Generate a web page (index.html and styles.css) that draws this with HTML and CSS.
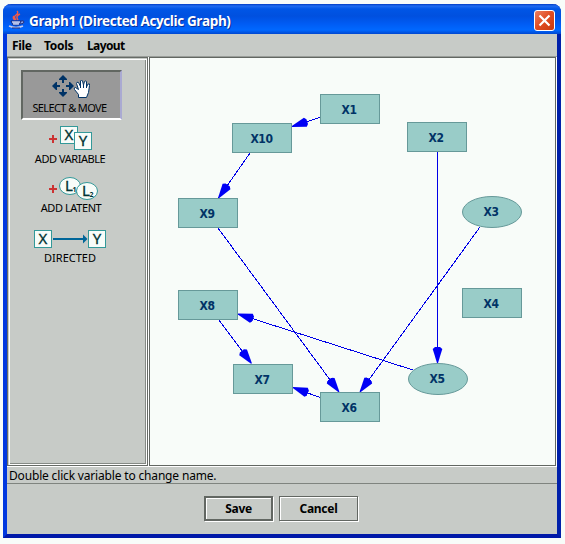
FILE: index.html
```html
<!DOCTYPE html>
<html lang="en">
<head>
<meta charset="utf-8">
<title>Graph1 (Directed Acyclic Graph)</title>
<link rel="stylesheet" href="styles.css">
</head>
<body>
<div class="window">
  <header class="titlebar">
    <svg class="java" width="16" height="18" viewBox="0 0 16 18">
      <path d="M8 0q2 2-1 4t0 5M11 3Q6 5 9 9M5 5q-2 2 1 4" fill="none" stroke="#f25a48" stroke-width="1.4"/>
      <path d="M2 10h10l-2 4H4zM12 10q3-1 3 1t-4 2" fill="#8aa0e0" stroke="#1c2b7e"/>
      <path d="M3 11h8M4 13h6" stroke="#dde4f8"/>
      <path d="M0 15q7 3 14 0" fill="none" stroke="#c0c9ee" stroke-width="1.5"/>
      <path d="M3 17h8" stroke="#202b77"/>
    </svg>
    <h1>Graph1 (Directed Acyclic Graph)</h1>
    <button class="close" aria-label="Close"><svg width="21" height="21" viewBox="0 0 21 21"><path d="M5.500 5.500l10 10M15.500 5.500l-10 10" stroke="#fff" stroke-width="2.200"/></svg></button>
  </header>
  <nav class="menu"><span class="m-file">File</span><span class="m-tools">Tools</span><span class="m-layout">Layout</span></nav>
  <main class="work">
    <aside class="tools">
      <div class="tool selected">
        <svg width="40" height="25" viewBox="0 0 40 25">
          <path fill="#003366" d="M11 0l4 4v1h-3v3h-2V5H7V4zM11 22l-4-4v-1h3v-3h2v3h3v1zM0 11l4-4h1v3h3v2H5v3H4zM22 11l-4 4h-1v-3h-3v-2h3V7h1z"/>
          <path d="M26.500 22.500v-3l-4-5q-1-2 1-2l3 2-2-6q0-2 2-1l2 4V6q1-2 2 0l1 4 1-3.500q1-1 2 0V12l1.500-3q2-1 1.500 1.500l-1 7-2 5z" fill="#fff" stroke="#003366"/>
          <path d="M28.500 11v2M31.500 10v3M34.500 11v2" stroke="#003366"/>
        </svg>
        <span class="label l-select">SELECT &amp; MOVE</span>
      </div>
      <div class="tool variable">
        <svg width="60" height="26" viewBox="0 0 60 26">
          <path d="M4 13h8M8 9v8" stroke="#cc3333" stroke-width="2"/>
          <rect x="15.500" y=".500" width="17" height="17" class="box"/><text x="24" y="14" class="glyph">X</text>
          <rect x="29.500" y="6.500" width="17" height="17" class="box"/><text x="38" y="20" class="glyph">Y</text>
        </svg>
        <span class="label l-variable">ADD VARIABLE</span>
      </div>
      <div class="tool latent">
        <svg width="60" height="26" viewBox="0 0 60 26">
          <path d="M4 13h8M8 9v8" stroke="#cc3333" stroke-width="2"/>
          <ellipse cx="25" cy="10" rx="10.500" ry="8.500" class="box"/><text x="24" y="15" class="glyph">L</text><text x="29.500" y="15.500" class="sub">1</text>
          <ellipse cx="42" cy="15" rx="10.500" ry="8.500" class="box"/><text x="41" y="20" class="glyph">L</text><text x="46.500" y="20.500" class="sub">2</text>
        </svg>
        <span class="label l-latent">ADD LATENT</span>
      </div>
      <div class="tool directed">
        <svg width="72" height="18" viewBox="0 0 72 18">
          <rect x=".500" y=".500" width="17" height="17" class="box"/><text x="9" y="14" class="glyph">X</text>
          <path d="M19 9h31" stroke="#006699" stroke-width="2"/><path d="M49 4.500l4.500 4.500-4.500 4.500z" fill="#006699"/>
          <rect x="54.500" y=".500" width="17" height="17" class="box"/><text x="63" y="14" class="glyph">Y</text>
        </svg>
        <span class="label l-directed">DIRECTED</span>
      </div>
    </aside>
    <section class="canvas">
      <svg width="405" height="407" viewBox="150 58 405 407">
        <defs><marker id="arrow" markerUnits="userSpaceOnUse" markerWidth="18" markerHeight="12" refX="16" refY="6" orient="auto"><path d="M0 3.500L2 1.200 16 5.500v1L2 10.800 0 8.500z" fill="#0000f5"/></marker></defs>
        <g class="edges">
          <path d="M320 117.500L292 126.500"/>
          <path d="M250 153L218.500 198"/>
          <path d="M218 228L339 392"/>
          <path d="M437.500 152V363"/>
          <path d="M480 227L360 392"/>
          <path d="M413 370L238 314"/>
          <path d="M219 320L251.500 363.500"/>
          <path d="M320 397.500L293 387.500"/>
        </g>
        <g class="nodes">
          <rect x="320.500" y="94.500" width="59" height="29"/><text x="349" y="114">X1</text>
          <rect x="232.500" y="123.500" width="59" height="29"/><text x="261.500" y="143">X10</text>
          <rect x="178.500" y="198.500" width="59" height="29"/><text x="207" y="218">X9</text>
          <rect x="407.500" y="122.500" width="59" height="29"/><text x="436" y="142">X2</text>
          <ellipse cx="492" cy="212" rx="29.500" ry="15.500"/><text x="491" y="216">X3</text>
          <rect x="462.500" y="288.500" width="59" height="29"/><text x="491" y="308">X4</text>
          <ellipse cx="438" cy="379" rx="29.500" ry="15.500"/><text x="437" y="383">X5</text>
          <rect x="320.500" y="392.500" width="59" height="29"/><text x="349" y="412">X6</text>
          <rect x="233.500" y="364.500" width="59" height="29"/><text x="262" y="384">X7</text>
          <rect x="178.500" y="290.500" width="59" height="29"/><text x="207" y="310">X8</text>
        </g>
      </svg>
    </section>
  </main>
  <div class="status"><span>Double click variable to change name.</span></div>
  <footer class="actions">
    <button class="btn save">Save</button>
    <button class="btn cancel">Cancel</button>
  </footer>
</div>
</body>
</html>
```

FILE: styles.css
```css
* { box-sizing: border-box; }
body { margin: 0; padding: 4px 0 0 3px; background: #f8fcf9; overflow: hidden; font-family: "DejaVu Sans", sans-serif; color: #000; }
button { font: inherit; padding: 0; }
svg { display: block; overflow: visible; }
.window { width: 558px; height: 534px; display: flex; flex-direction: column; border: solid #0038df; border-width: 0 4px 4px; border-color: #0038df #0020aa #0018a8 #0038df; border-radius: 8px 8px 0 0; background: #c7cbc7; }
.titlebar { height: 30px; flex: none; margin: 0 -4px; padding: 2px 6px 0 6px; display: flex; align-items: center; border-radius: 8px 8px 0 0; background: linear-gradient(#003bc4 0, #1f6cf0 2px, #0056e6 5px, #0050df 12px, #005cf4 20px, #0068ff 26px, #0047d0 30px); }
.titlebar h1 { margin: 2px auto 0 4px; font: bold 13.5px/20px "Open Sans", sans-serif; color: #fff; text-shadow: 1px 1px #07309b; white-space: nowrap; letter-spacing: -.4px; }
.close { width: 21px; height: 21px; border: 1px solid #fff; border-radius: 3px; background: linear-gradient(135deg, #ed8061, #e04b20 50%, #c93a10); }
.close svg { margin: -1px; }
.menu { height: 23px; flex: none; padding: 1px 0 0 5px; display: flex; font: bold 12px/22px "Noto Sans", sans-serif; letter-spacing: -.3px; border-bottom: 1px solid #999d99; }
.m-file { width: 32px; }
.m-tools { width: 43px; }
.m-layout { letter-spacing: -.6px; }
.work { height: 410px; flex: none; display: flex; border-bottom: 1px solid #fff; }
.tools { width: 141px; padding-top: 12px; border: 1px solid #666b66; box-shadow: inset 1px 1px #c7cbc7, inset 2px 2px #fff, inset -1px -1px #fff, inset -2px -2px #858a85; display: flex; flex-direction: column; }
.tool { display: flex; flex-direction: column; align-items: center; width: 124px; font: 11px/13px "Noto Sans", sans-serif; white-space: nowrap; }
.selected { width: 101px; height: 50px; margin-left: 13px; padding: 3px 4px 0 0; background: #999; border: 2px solid #fff; border-top-color: #626762; border-left-color: #626762; border-right-color: #aaaad2; }
.selected svg { margin-left: 4px; }
.l-select { margin-top: 1px; letter-spacing: -.6px; }
.l-variable { letter-spacing: -.45px; }
.l-latent { margin: -1px 0 0 2px; letter-spacing: -.4px; }
.l-directed { margin-top: 3px; }
.variable, .latent { height: 50px; padding-top: 6px; }
.variable svg, .latent svg { margin-left: 10px; }
.directed { padding-top: 10px; }
.box { fill: #f8fcf9; stroke: #339999; }
.glyph { font: 15px/1 "Noto Sans", sans-serif; fill: #003333; stroke: #003333; stroke-width: .3px; text-anchor: middle; }
.sub { font: bold 7px "Noto Sans", sans-serif; fill: #003333; text-anchor: middle; }
.canvas { width: 407px; margin-left: 1px; border: 1px solid #626762; outline: 1px solid #fff; background: #f8fcf9; clip-path: inset(0 -1px -1px -1px); }
.edges path { fill: none; stroke: #0000e8; stroke-width: 1px; marker-end: url(#arrow); shape-rendering: crispEdges; }
.nodes rect, .nodes ellipse { fill: #99ccc8; stroke: #669999; }
.nodes text { font: bold 12px "DejaVu Sans", sans-serif; font-stretch: condensed; letter-spacing: -.4px; fill: #003366; text-anchor: middle; }
.status { height: 17px; flex: none; padding-left: 2px; border-bottom: 1px solid #7f847f; font: 12px/18px "Noto Sans", sans-serif; letter-spacing: -.17px; white-space: nowrap; }
.actions { display: flex; padding: 12px 0 0 197px; gap: 6px; }
.btn { height: 25px; background: #c7cbc7; color: #000; font: bold 12px/20px "Noto Sans", sans-serif; letter-spacing: -.3px; padding-top: 1px; }
.save { width: 69px; border: 2px solid #626762; box-shadow: 1px 1px #fff, inset 1px 1px #fff; }
.cancel { width: 79px; border: 1px solid #626762; box-shadow: 1px 1px #fff, inset 1px 1px #fff; }
```
